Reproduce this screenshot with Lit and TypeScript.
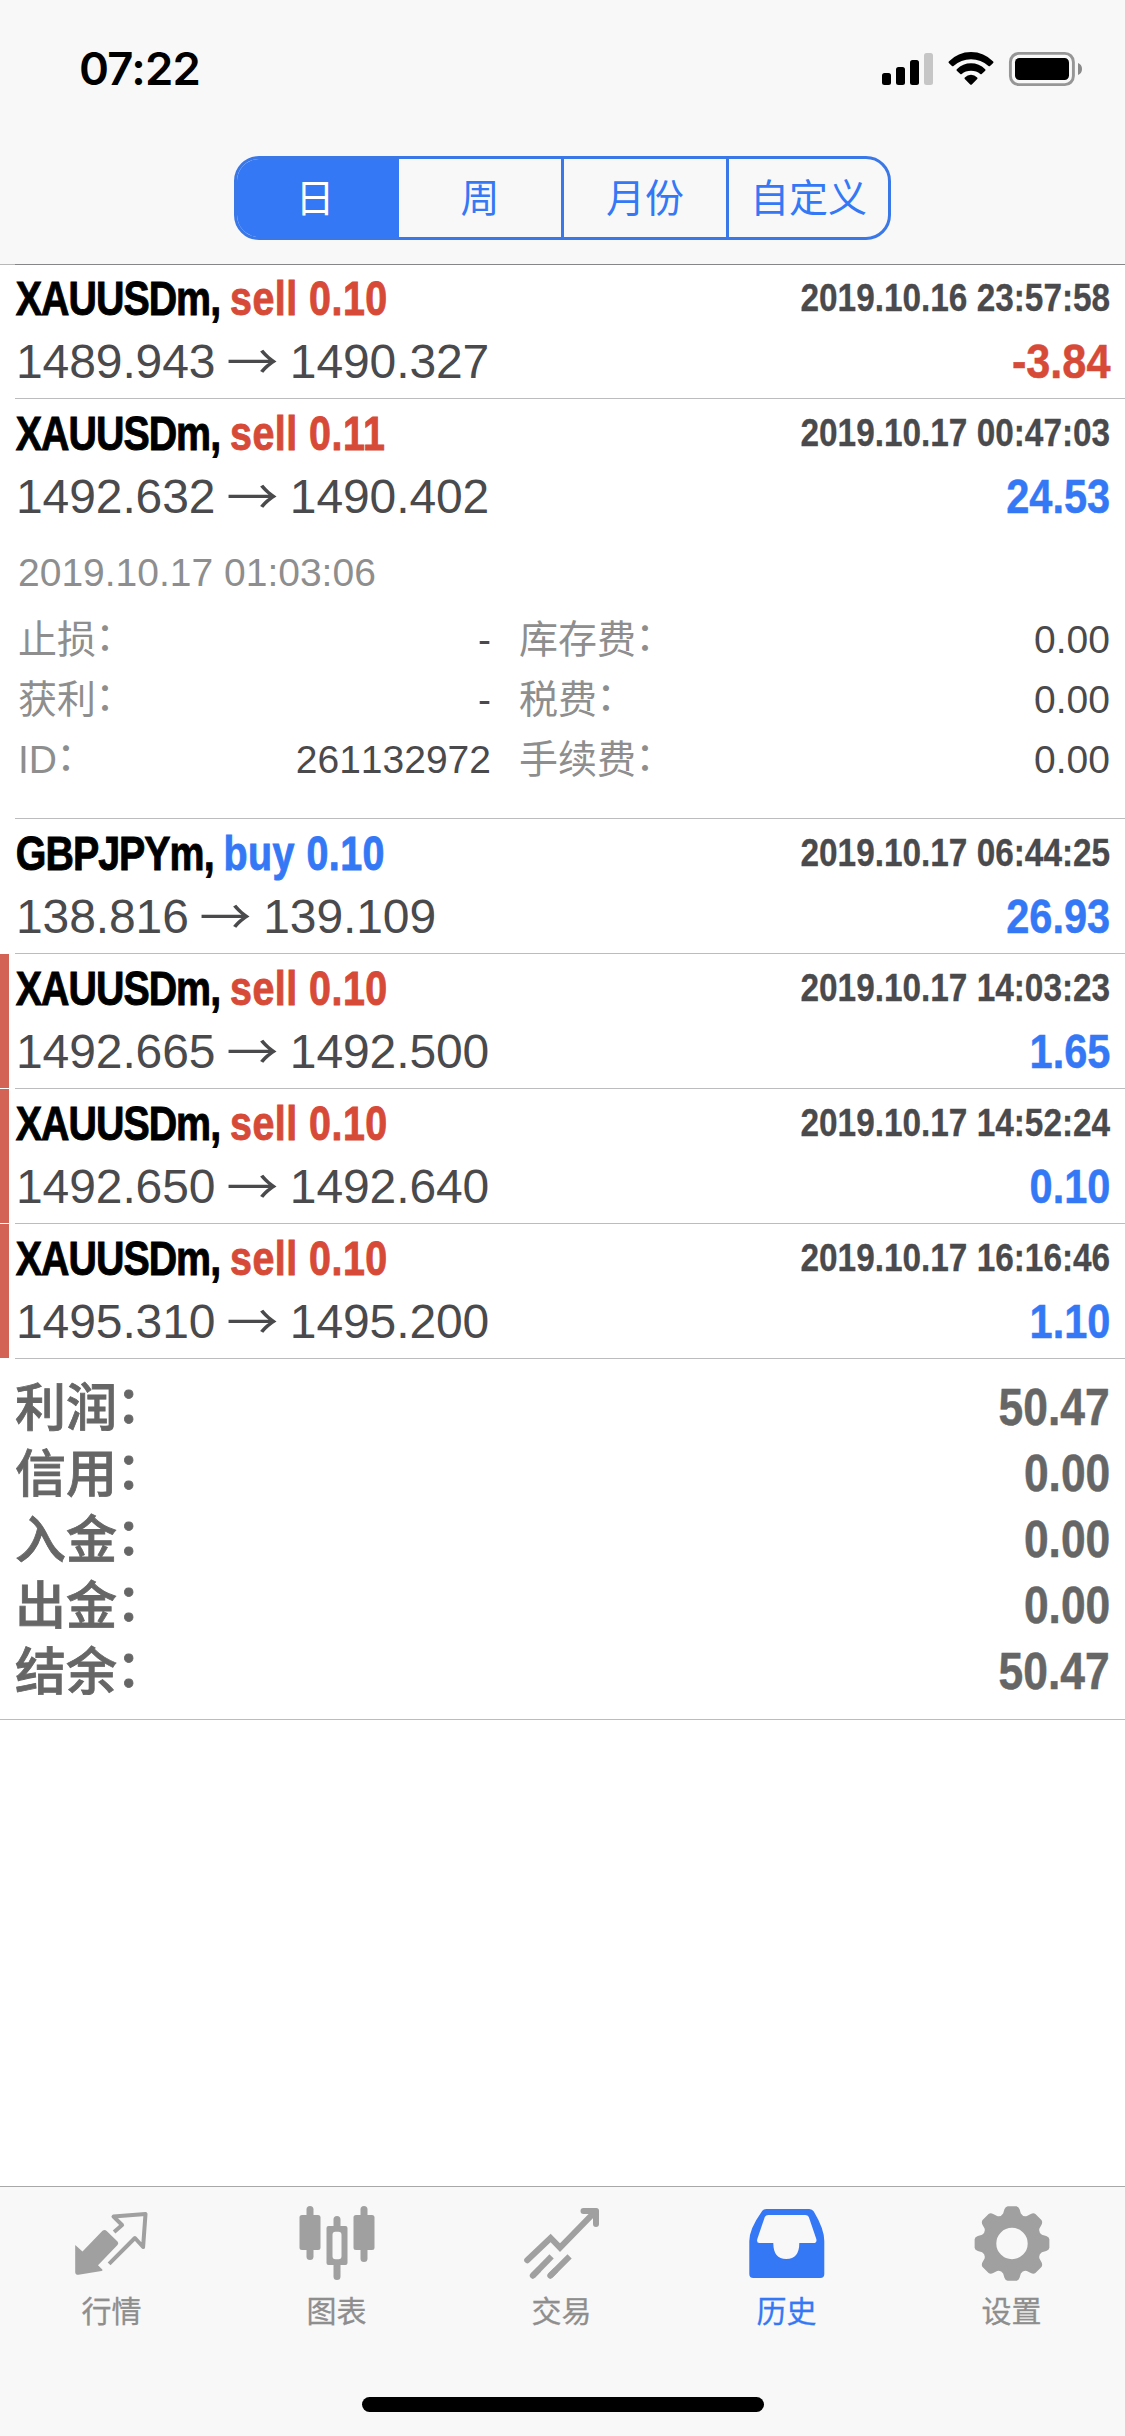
import { LitElement, html, svg, css, TemplateResult } from "lit";
import { customElement, property } from "lit/decorators.js";
import { classMap } from "lit/directives/class-map.js";

interface Deal {
  symbol: string;
  side: "sell" | "buy";
  volume: string;
  open: string;
  close: string;
  time: string;
  profit: string;
  marked?: boolean;
  detail?: { time: string; rows: [string, string, string, string][] };
}

const DEALS: Deal[] = [
  { symbol: "XAUUSDm", side: "sell", volume: "0.10", open: "1489.943", close: "1490.327", time: "2019.10.16 23:57:58", profit: "-3.84" },
  {
    symbol: "XAUUSDm", side: "sell", volume: "0.11", open: "1492.632", close: "1490.402", time: "2019.10.17 00:47:03", profit: "24.53",
    detail: {
      time: "2019.10.17 01:03:06",
      rows: [
        ["止损", "-", "库存费", "0.00"],
        ["获利", "-", "税费", "0.00"],
        ["ID", "261132972", "手续费", "0.00"],
      ],
    },
  },
  { symbol: "GBPJPYm", side: "buy", volume: "0.10", open: "138.816", close: "139.109", time: "2019.10.17 06:44:25", profit: "26.93" },
  { symbol: "XAUUSDm", side: "sell", volume: "0.10", open: "1492.665", close: "1492.500", time: "2019.10.17 14:03:23", profit: "1.65", marked: true },
  { symbol: "XAUUSDm", side: "sell", volume: "0.10", open: "1492.650", close: "1492.640", time: "2019.10.17 14:52:24", profit: "0.10", marked: true },
  { symbol: "XAUUSDm", side: "sell", volume: "0.10", open: "1495.310", close: "1495.200", time: "2019.10.17 16:16:46", profit: "1.10", marked: true },
];

const SUMMARY: [string, string][] = [
  ["利润", "50.47"],
  ["信用", "0.00"],
  ["入金", "0.00"],
  ["出金", "0.00"],
  ["结余", "50.47"],
];

// A label followed by a full-width colon, centred on the height of the characters.
const caption = (text: string): TemplateResult => html`<span class="label">${text}<span class="colon">：</span></span>`;

const colonStyles = css`
  .colon { display: inline-block; transform: translate(-0.02em, -0.065em); }
`;

const gearPath = (): string => {
  const pts: string[] = [];
  for (let i = 0; i < 8; i++) {
    const at = (deg: number, r: number): string => {
      const a = ((i * 45 + deg - 90) * Math.PI) / 180;
      return `${(40 + r * Math.cos(a)).toFixed(2)} ${(40 + r * Math.sin(a)).toFixed(2)}`;
    };
    pts.push(
      `${i === 0 ? "M" : "L"}${at(-16.5, 31.2)}`,
      `L${at(-12.5, 35)}Q${at(-10, 37.7)} ${at(-6.5, 37.6)}`,
      `L${at(6.5, 37.6)}Q${at(10, 37.7)} ${at(12.5, 35)}`,
      `L${at(16.5, 31.2)}Q${at(22.5, 28.6)} ${at(28.5, 31.2)}`
    );
  }
  return pts.join("") + "ZM40 24.3a15.7 15.7 0 1 0 0 31.4a15.7 15.7 0 1 0 0-31.4Z";
};

const ICONS = {
  quotes: svg`
    <path fill="currentColor" d="M4.700 40L12 46.500L32 25.800Q34.200 24 36.200 26L47 36.600Q48.600 38.300 47 40L27.500 60.200L31.800 64.400Q32.600 65.800 31 66L8 69.800Q4.700 70 4.700 67Z"/>
    <path fill="none" stroke="currentColor" stroke-width="4" stroke-linejoin="round" d="M43.600 27L51.600 20L43 11.600L75 9L72.600 42L64.400 33L38.600 58.800"/>`,
  chart: svg`
    <g fill="currentColor">
      <rect x="6.600" y="1" width="7" height="54" rx="3.500"/><rect x="-.400" y="10" width="21" height="35" rx="2.500"/>
      <rect x="60.600" y="1" width="7" height="56" rx="3.500"/><rect x="53.600" y="10" width="21" height="35" rx="2.500"/>
      <path d="M33.600 24V14.500a3.500 3.500 0 0 1 7 0V24ZM33.600 57V71.500a3.500 3.500 0 0 0 7 0V57Z"/>
      <path fill-rule="evenodd" d="M28.600 21h17a2 2 0 0 1 2 2v35a2 2 0 0 1-2 2h-17a2 2 0 0 1-2-2V23a2 2 0 0 1 2-2ZM35.600 26.700a3 3 0 0 0-3 3v21.500a3 3 0 0 0 3 3h3a3 3 0 0 0 3-3V29.700a3 3 0 0 0-3-3Z"/>
    </g>`,
  trade: svg`
    <g fill="none" stroke="currentColor" stroke-width="6" stroke-linecap="round">
      <path d="M4.200 55.200L27.600 33L37 42.600L72.600 6.200"/><path stroke-linejoin="round" d="M60.500 5.900H73V19"/>
      <path d="M9.800 70.700L15 65.500"/><path stroke-linecap="butt" d="M9.800 70.700L28.600 51.400"/>
      <path d="M27.300 70.700L32 66"/><path stroke-linecap="butt" d="M27.300 70.700L46.600 51.400"/>
    </g>`,
  history: svg`
    <path fill="currentColor" fill-rule="evenodd" d="M17 4H60Q63 4 64.500 6.500Q75 24 75 36V69Q75 73 71 73H4Q0 73 0 69V36Q0 24 12.500 6.500Q14 4 17 4ZM19 10Q16.500 10 15.500 12L8 34Q7 38 10 38H24Q24 54 37 54Q50 54 50 38H64Q68 38 67 34L59.500 12Q58.500 10 56 10Z"/>`,
  gear: svg`<path fill="currentColor" fill-rule="evenodd" d="${gearPath()}"/>`,
};

@customElement("status-bar")
export class StatusBar extends LitElement {
  static styles = css`
    :host {
      display: flex;
      justify-content: space-between;
      align-items: center;
      height: 138px;
      padding: 0 41px 0 79px;
      box-sizing: border-box;
    }
    .time {
      font: 600 45.500px/60px Inter, "Liberation Sans", sans-serif;
      letter-spacing: -0.8px;
    }
    .icons { display: block; }
  `;
  render() {
    return html`
      <span class="time">07:22</span>
      <svg class="icons" width="204" height="40" viewBox="880 49 204 40">
        <rect x="882" y="73" width="9" height="12" rx="2.500" />
        <rect x="896" y="67" width="9" height="18" rx="2.500" />
        <rect x="910" y="60" width="9" height="25" rx="2.500" />
        <rect x="924" y="53" width="9" height="32" rx="2.500" fill="#c6c6c6" />
        <path d="M948.800 61.500Q958 52 971 52T993.200 61.500Q993.800 62.300 993.200 63L990 66Q989.300 66.600 988.500 66Q981 59.200 971 59.200T953.500 66Q952.700 66.600 952 66L948.800 63Q948.200 62.300 948.800 61.500Z" />
        <path d="M956.800 69.200Q963 63.300 971 63.300T985.200 69.200Q985.900 70 985.200 70.700L981.700 74Q981 74.600 980.300 74Q976.500 70.700 971 70.700T961.700 74Q961 74.600 960.300 74L956.800 70.700Q956.100 70 956.800 69.200Z" />
        <path d="M964.800 77.500Q967.500 74.800 971 74.800T977.200 77.500Q977.900 78.300 977.200 79L971.800 84.500Q971 85.200 970.200 84.500L964.800 79Q964.100 78.300 964.800 77.500Z" />
        <rect x="1010.400" y="53.400" width="63" height="31.200" rx="8.500" fill="none" stroke="#969696" stroke-width="2.900" />
        <rect x="1015" y="58" width="54" height="22" rx="4.500" />
        <path fill="#8a8a8a" d="M1078 63q4 1.600 4 6t-4 6Z" />
      </svg>
    `;
  }
}

@customElement("period-tabs")
export class PeriodTabs extends LitElement {
  static styles = css`
    :host { display: flex; justify-content: center; }
    .group {
      display: grid;
      grid-template-columns: 162px 165px 165px 159px;
      box-sizing: border-box;
      width: 657px;
      height: 84px;
      border: 3px solid #3b78e7;
      border-radius: 25px;
      background: #f8f8f8;
      overflow: hidden;
    }
    .segment {
      color: #3478f6;
      border-right: 3px solid #3b78e7;
      font: 400 39px/80px "Liberation Sans", "Noto Sans CJK SC", sans-serif;
      text-align: center;
      white-space: nowrap;
    }
    .segment:last-child { border-right: 0; }
    .active { background: #3478f6; color: #fff; border-color: #3478f6; padding-right: 3px; }
  `;
  render() {
    return html`<div class="group">
      ${["日", "周", "月份", "自定义"].map(
        (label, i) => html`<span class=${classMap({ segment: true, active: i === 0 })}>${label}</span>`
      )}
    </div>`;
  }
}

@customElement("deal-row")
export class DealRow extends LitElement {
  @property({ attribute: false }) deal!: Deal;

  static styles = [
    colonStyles,
    css`
      :host {
        display: flex;
        font-family: "Liberation Sans", "Noto Sans CJK SC", sans-serif;
        color: #4a4a4d;
        white-space: nowrap;
      }
      .mark { width: 9px; margin-right: 6px; margin-bottom: 1px; flex: none; }
      .on { background: #d36354; }
      .body { flex: 1; border-bottom: 1px solid #bcbcbe; padding: 4px 15px 0 0; }
      .line { display: flex; justify-content: space-between; }
      .top { height: 61px; }
      .bottom { height: 69px; }
      .title {
        font-weight: 700;
        font-size: 48px;
        line-height: 61px;
        color: #000;
        transform: scaleX(0.82);
        transform-origin: left;
        -webkit-text-stroke: 0.9px currentColor;
        padding-left: 1px;
      }
      .symbol { letter-spacing: -1.200px; }
      .deal { letter-spacing: 0.600px; -webkit-text-stroke: 0.9px currentColor; }
      .sell, .loss { color: #d64a37; }
      .buy, .gain { color: #3478f6; }
      .time {
        font-weight: 700;
        font-size: 39px;
        line-height: 59px;
        transform: scaleX(0.855);
        transform-origin: right;
        -webkit-text-stroke: 0.3px currentColor;
      }
      .profit {
        font-weight: 700;
        font-size: 48px;
        line-height: 65px;
        transform: scaleX(0.865);
        transform-origin: right;
        -webkit-text-stroke: 0.5px currentColor;
      }
      .loss { transform: scaleX(0.9); }
      .price { font-size: 48px; line-height: 65px; padding-left: 1px; letter-spacing: -0.100px; }
      .arrow {
        display: inline-block;
        font-family: "Noto Sans CJK SC", sans-serif;
        line-height: 1px;
        transform: translate(-0.5px, 1px) scaleX(1.08);
      }
      .detail { box-sizing: border-box; height: 285px; padding-top: 10px; font-size: 39px; color: #8e8e8e; }
      .closed { padding-left: 3px; line-height: 60px; margin-bottom: 7px; }
      .grid {
        display: grid;
        grid-template-columns: 473px 1fr;
        column-gap: 28px;
        padding-left: 3px;
        line-height: 60px;
      }
      .cell { display: flex; justify-content: space-between; }
      .value { color: #4a4a4d; font-kerning: none; }
    `,
  ];

  render() {
    const d = this.deal;
    return html`
      <div class=${classMap({ mark: true, on: !!d.marked })}></div>
      <div class="body">
        <div class="line top">
          <span class="title"><span class="symbol">${d.symbol}, </span><span class="deal ${d.side}">${d.side} ${d.volume}</span></span>
          <span class="time">${d.time}</span>
        </div>
        <div class="line bottom">
          <span class="price">${d.open} <span class="arrow">→</span> ${d.close}</span>
          <span class="profit ${d.profit.startsWith("-") ? "loss" : "gain"}">${d.profit}</span>
        </div>
        ${d.detail
          ? html`<div class="detail">
              <div class="closed">${d.detail.time}</div>
              <div class="grid">
                ${d.detail.rows.map(
                  ([a, b, c, e]) => html`
                    <div class="cell">${caption(a)}<span class="value">${b}</span></div>
                    <div class="cell">${caption(c)}<span class="value">${e}</span></div>
                  `
                )}
              </div>
            </div>`
          : ""}
      </div>
    `;
  }
}

@customElement("tab-bar")
export class TabBar extends LitElement {
  static styles = css`
    :host {
      display: block;
      box-sizing: border-box;
      height: 250px;
      border-top: 1px solid #a8a8a8;
      background: #f8f8f8;
    }
    .tabs { display: grid; grid-template-columns: repeat(5, 1fr); height: 210px; }
    .tab {
      display: flex;
      flex-direction: column;
      align-items: center;
      padding-top: 18px;
      color: #8e8e8e;
      font: 400 30px/40px "Liberation Sans", "Noto Sans CJK SC", sans-serif;
    }
    .name { margin-right: 2px; -webkit-text-stroke: 0.3px currentColor; }
    .icon { display: block; color: #a0a0a0; overflow: visible; margin-bottom: 7px; }
    .active, .active .icon { color: #3478f6; }
    .home { width: 402px; height: 15px; border-radius: 8px; background: #000; margin: 0 auto; }
  `;
  render() {
    const tabs = [
      { label: "行情", icon: ICONS.quotes, box: "2.500 0 80 80" },
      { label: "图表", icon: ICONS.chart, box: "-1.900 0 80 80" },
      { label: "交易", icon: ICONS.trade, box: "0 0 80 80" },
      { label: "历史", icon: ICONS.history, box: "-1.300 0 80 80" },
      { label: "设置", icon: ICONS.gear, box: "1 1.500 80 80" },
    ];
    return html`
      <div class="tabs">
        ${tabs.map(
          (t, i) => html`<div class=${classMap({ tab: true, active: i === 3 })}>
            <svg class="icon" width="80" height="80" viewBox=${t.box}>${t.icon}</svg>
            <span class="name">${t.label}</span>
          </div>`
        )}
      </div>
      <div class="home"></div>
    `;
  }
}

@customElement("app-root")
export class AppRoot extends LitElement {
  static styles = [
    colonStyles,
    css`
      :host {
        display: flex;
        flex-direction: column;
        width: 1125px;
        height: 2436px;
        background: #fff;
        overflow: hidden;
      }
      .header { background: #f8f8f8; height: 264px; display: flex; flex-direction: column; gap: 18px; }
      .rule { height: 1px; background: linear-gradient(to right, #b8b8b8 15px, #868688 15px); }
      .history { flex: 1; display: flex; flex-direction: column; }
      .first { margin-top: -1px; }
      .summary { padding: 16px 15px 14px; border-bottom: 1px solid #bcbcbe; color: #666; }
      .total {
        display: flex;
        justify-content: space-between;
        height: 66px;
        font: 700 51px/66px "Liberation Sans", "Noto Sans CJK SC", sans-serif;
      }
      .label { font-weight: 500; -webkit-text-stroke: 0.8px currentColor; padding-top: 1px; }
      .amount { transform: scaleX(0.87); transform-origin: right; -webkit-text-stroke: 0.5px currentColor; }
    `,
  ];
  render() {
    return html`
      <div class="header">
        <status-bar></status-bar>
        <period-tabs></period-tabs>
      </div>
      <div class="rule"></div>
      <div class="history">
        ${DEALS.map((d, i) => html`<deal-row class=${classMap({ first: i === 0 })} .deal=${d}></deal-row>`)}
        <div class="summary">
          ${SUMMARY.map(
            ([label, amount]) => html`<div class="total">${caption(label)}<span class="amount">${amount}</span></div>`
          )}
        </div>
      </div>
      <tab-bar></tab-bar>
    `;
  }
}
